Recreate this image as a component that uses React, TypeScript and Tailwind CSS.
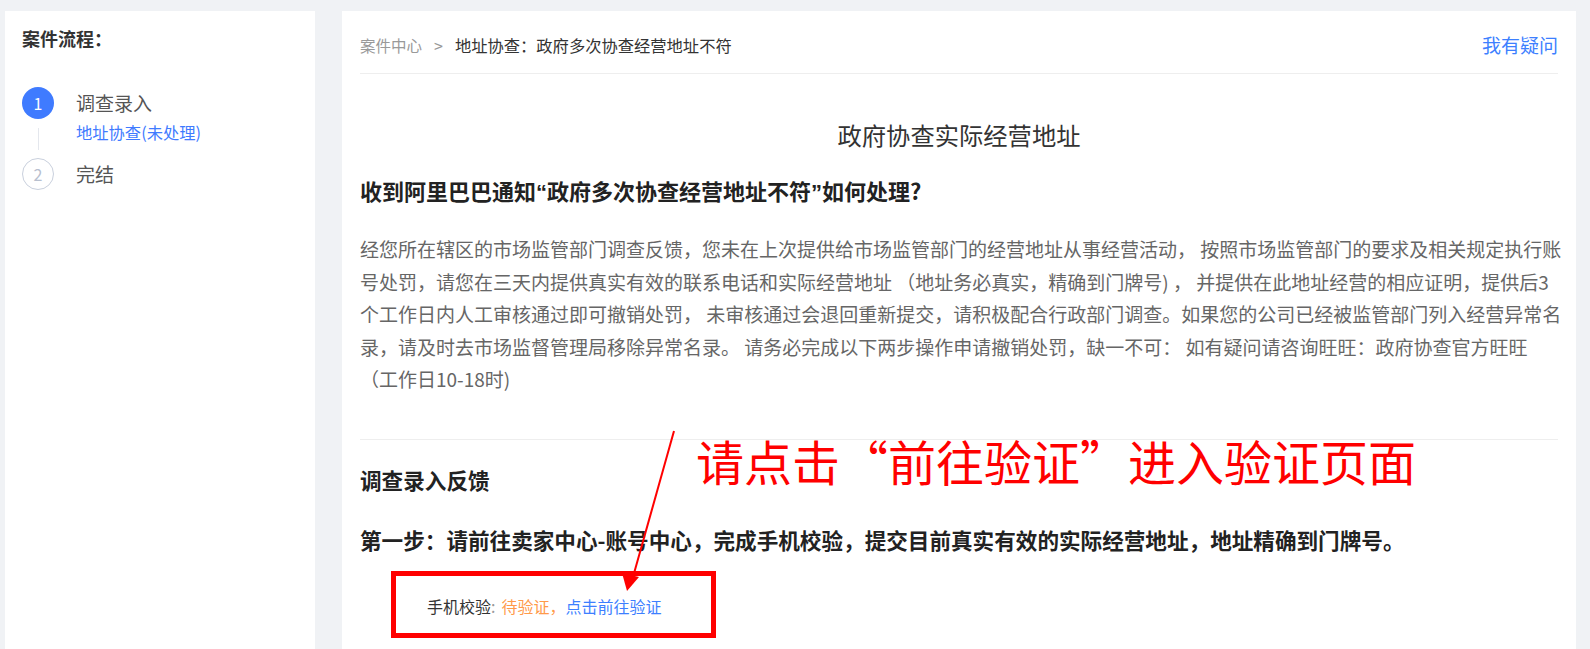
import React from "react";

const FONT = { fontFamily: '"Noto Sans CJK SC", "Noto Sans", sans-serif' };
const LATIN = { fontFamily: '"Liberation Sans", "Noto Sans", sans-serif' };

const bodyLines = [
  "经您所在辖区的市场监管部门调查反馈，您未在上次提供给市场监管部门的经营地址从事经营活动， 按照市场监管部门的要求及相关规定执行账",
  "号处罚，请您在三天内提供真实有效的联系电话和实际经营地址 （地址务必真实，精确到门牌号) ， 并提供在此地址经营的相应证明，提供后3",
  "个工作日内人工审核通过即可撤销处罚， 未审核通过会退回重新提交，请积极配合行政部门调查。如果您的公司已经被监管部门列入经营异常名",
  "录，请及时去市场监督管理局移除异常名录。 请务必完成以下两步操作申请撤销处罚，缺一不可： 如有疑问请咨询旺旺：政府协查官方旺旺",
  "（工作日10-18时)",
];

export default function App() {
  return (
    <div
      className="relative min-h-screen bg-[#f0f2f5] flex gap-[27px] pt-[11px] pl-[5px] pr-[14px] overflow-hidden"
      style={FONT}
    >
      {/* Left panel */}
      <aside className="w-[310px] shrink-0 bg-white h-[640px] pl-[17px] pt-[15px]">
        <div className="text-[18px] leading-[24px] font-bold text-[#333]">案件流程：</div>
        <div className="mt-[37px]">
          <div className="flex pb-[15px]">
            <div className="w-8 flex flex-col items-center">
              <div className="w-8 h-8 rounded-full bg-[#3f7bff] text-white text-[16px] flex items-center justify-center">
                1
              </div>
              <div className="flex-1 w-px bg-[#e4e7ed] mt-[9px] mb-[-7px]" />
            </div>
            <div className="ml-[22px]">
              <div className="text-[19px] leading-8 text-[#555]">调查录入</div>
              <div className="text-[16.3px] leading-[22px] mt-[2px] text-[#3f7bff]">地址协查(未处理)</div>
            </div>
          </div>
          <div className="flex">
            <div className="w-8 h-8 rounded-full border border-[#c9d0dd] text-[#b8c0cf] text-[16px] flex items-center justify-center">
              2
            </div>
            <div className="ml-[22px] text-[19px] leading-8 text-[#555]">完结</div>
          </div>
        </div>
      </aside>

      {/* Right panel */}
      <main className="flex-1 min-w-0 overflow-hidden bg-white h-[640px] px-[18px]">
        <div className="flex items-center justify-between pt-[23px] pb-[17px] border-b border-[#eeeeee] leading-[22px]">
          <div className="flex items-center text-[16px]">
            <span className="text-[#999] text-[15.5px]">案件中心</span>
            <span className="text-[#999] ml-[12px] mr-[12px]">&gt;</span>
            <span className="text-[#333] text-[16.3px]">地址协查：政府多次协查经营地址不符</span>
          </div>
          <a className="text-[19px] text-[#3d7fff]">我有疑问</a>
        </div>

        <h1 className="mt-[45px] text-center text-[24.3px] leading-8 text-[#333]">政府协查实际经营地址</h1>

        <h2 className="mt-[23px] text-[22px] leading-8 font-bold text-[#222]">
          收到阿里巴巴通知<span style={LATIN}>“</span>政府多次协查经营地址不符<span style={LATIN}>”</span>如何处理?
        </h2>

        <p className="mt-[24px] text-[19px] leading-[32.5px] text-[#666]">
          {bodyLines.map((l, i) => (
            <span key={i} className="block whitespace-nowrap">
              {l}
            </span>
          ))}
        </p>

        <div className="mt-[43px] border-t border-[#eeeeee]" />

        <h3 className="mt-[25px] text-[21.6px] leading-[30px] font-bold text-[#222]">调查录入反馈</h3>

        <h3 className="mt-[30px] text-[21.6px] leading-[30px] font-bold text-[#222]">
          第一步：请前往卖家中心-账号中心，完成手机校验，提交目前真实有效的实际经营地址，地址精确到门牌号。
        </h3>

        <div className="mt-[16px] ml-[31px] w-[325px] h-[67px] border-[5px] border-[#ff0000] flex items-center pl-[31px] pt-[3px] text-[16px]">
          <span className="text-[#333]">手机校验</span>
          <span className="text-[#999] mr-[6px]">:</span>
          <span className="text-[#ff9a4a]">待验证，</span>
          <span className="text-[#3d7fff]">点击前往验证</span>
        </div>
      </main>

      {/* Annotation overlay */}
      <div className="absolute left-[696px] top-[432px] text-[48px] leading-[56px] text-[#ff0000] whitespace-nowrap">
        请点击“前往验证”进入验证页面
      </div>
      <svg className="absolute left-0 top-0 pointer-events-none" width="1590" height="649" viewBox="0 0 1590 649">
        <line x1="674" y1="431" x2="633" y2="577" stroke="#ff0000" strokeWidth="2" />
        <polygon points="627,591 622,573 639,577" fill="#ff0000" />
      </svg>
    </div>
  );
}
